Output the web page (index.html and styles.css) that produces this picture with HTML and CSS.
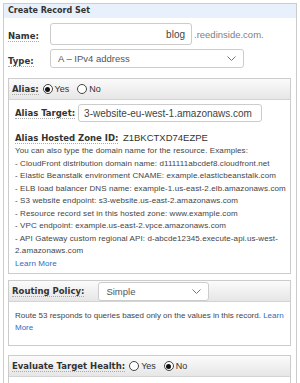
FILE: index.html
```html
<!DOCTYPE html>
<html lang="en">
<head>
    <meta charset="UTF-8">
    <meta name="viewport" content="width=device-width, initial-scale=1.0">
    <title>Create Record Set</title>
    <link rel="stylesheet" href="styles.css">
</head>
<body>
    <div class="panel">
        <div class="panel-head">Create Record Set</div>
        <div class="panel-body">

            <div class="row">
                <div class="field-label"><span class="label">Name:</span></div>
                <div class="input name-input">blog</div>
                <span class="suffix">.reedinside.com.</span>
            </div>

            <div class="row type-row">
                <div class="field-label"><span class="label">Type:</span></div>
                <div class="input select type-select">
                    <span>A – IPv4 address</span>
                    <svg class="chevron" width="9" height="5" viewBox="0 0 9 5"><path d="M0.5 0.5 L4.5 4.5 L8.5 0.5" fill="none" stroke="#777" stroke-width="1"/></svg>
                </div>
            </div>

            <!-- alias -->
            <div class="section alias">
                <div class="section-head">
                    <span class="label">Alias:</span>
                    <span class="radio checked"></span><span class="radio-text">Yes</span>
                    <span class="radio"></span><span class="radio-text">No</span>
                </div>
                <div class="section-body">
                    <div class="target-row">
                        <span class="label">Alias Target:</span>
                        <div class="input target-input">3-website-eu-west-1.amazonaws.com</div>
                    </div>
                    <div class="zone-row">
                        <span class="label">Alias Hosted Zone ID:</span> <span class="zone-id">Z1BKCTXD74EZPE</span>
                    </div>
                    <div class="help">
                        <div>You can also type the domain name for the resource. Examples:</div>
                        <div>- CloudFront distribution domain name: d111111abcdef8.cloudfront.net</div>
                        <div>- Elastic Beanstalk environment CNAME: example.elasticbeanstalk.com</div>
                        <div>- ELB load balancer DNS name: example-1.us-east-2.elb.amazonaws.com</div>
                        <div>- S3 website endpoint: s3-website.us-east-2.amazonaws.com</div>
                        <div>- Resource record set in this hosted zone: www.example.com</div>
                        <div>- VPC endpoint: example.us-east-2.vpce.amazonaws.com</div>
                        <div>- API Gateway custom regional API: d-abcde12345.execute-api.us-west-2.amazonaws.com</div>
                        <a href="#" class="link">Learn More</a>
                    </div>
                </div>
            </div>

            <!-- routing -->
            <div class="section routing">
                <div class="section-head">
                    <span class="label">Routing Policy:</span>
                    <div class="input select policy-select">
                        <span>Simple</span>
                        <svg class="chevron" width="9" height="5" viewBox="0 0 9 5"><path d="M0.5 0.5 L4.5 4.5 L8.5 0.5" fill="none" stroke="#777" stroke-width="1"/></svg>
                    </div>
                </div>
                <div class="section-body routing-body">
                    Route 53 responds to queries based only on the values in this record. <a href="#" class="link">Learn More</a>
                </div>
            </div>

            <!-- health -->
            <div class="section health">
                <div class="section-head">
                    <span class="label">Evaluate Target Health:</span>
                    <span class="radio"></span><span class="radio-text">Yes</span>
                    <span class="radio checked"></span><span class="radio-text">No</span>
                </div>
                <div class="section-body health-body"></div>
            </div>

        </div>
    </div>
</body>
</html>
```

FILE: styles.css
```css
body {
    margin: 0;
    font-family: "Liberation Sans", Arial, sans-serif;
    color: #333;
    background: #fff;
}
.panel {
    margin: 3px 3px 0;
    border: 1px solid #ccc;
    border-bottom: none;
}
.panel-head {
    background-color: #e8f0fb;
    font-family: "DejaVu Sans", Verdana, sans-serif;
    font-weight: bold;
    font-size: 8px;
    height: 14px;
    line-height: 14px;
    padding-left: 4px;
    color: #333;
}
.panel-body {
    padding: 5px 5px 0 4px;
}
.label {
    font-family: "DejaVu Sans", Verdana, sans-serif;
    font-weight: bold;
    font-size: 8.5px;
    color: #333;
    border-bottom: 1px dotted #aaa;
    white-space: nowrap;
}
.row {
    display: flex;
    align-items: center;
}
.type-row {
    margin-top: 4px;
}
.field-label {
    width: 42px;
    flex: none;
}
.input {
    box-sizing: border-box;
    border: 1px solid #ccc;
    border-radius: 3px;
    background: #fff;
    display: flex;
    align-items: center;
    font-size: 10px;
    color: #444;
    padding: 0 6px;
    white-space: nowrap;
    overflow: hidden;
}
.name-input {
    width: 142px;
    height: 22px;
    justify-content: flex-end;
}
.suffix {
    margin-left: 2px;
    font-size: 9.5px;
    color: #808080;
}
.select {
    justify-content: space-between;
    font-size: 9.5px;
    color: #555;
}
.type-select {
    width: 194px;
    height: 19px;
    padding: 0 7px;
}
.chevron {
    flex: none;
}
.section {
    border: 1px solid #ccc;
    margin-top: 9px;
}
.section.alias {
    margin-top: 10px;
}
.section.routing {
    margin-top: 6px;
}
.section-head {
    height: 20px;
    display: flex;
    align-items: center;
    padding-left: 3px;
    background: linear-gradient(#fbfbfb, #e6e6e6);
    border-bottom: 1px solid #d4d4d4;
}
.section-head .label {
    margin-right: 4px;
}
.radio {
    box-sizing: border-box;
    width: 10px;
    height: 10px;
    border: 1px solid #444;
    border-radius: 50%;
    background: #fff;
    display: flex;
    align-items: center;
    justify-content: center;
    margin-right: 2px;
}
.radio.checked::after {
    content: "";
    width: 5px;
    height: 5px;
    border-radius: 50%;
    background: #111;
}
.radio-text {
    font-size: 9px;
    color: #333;
    margin-right: 8px;
}
.section-body {
    background: #fff;
    padding: 4px 3px 3px 6px;
}
.target-row {
    display: flex;
    align-items: center;
}
.target-input {
    margin-left: 3px;
    width: 184px;
    height: 18px;
    padding: 0 5px;
}
.zone-row {
    margin-top: 7px;
    height: 14px;
    line-height: 14px;
}
.zone-id {
    font-size: 9.5px;
    color: #333;
}
.help {
    margin-top: 2px;
    font-size: 8px;
    letter-spacing: 0.1px;
    line-height: 12.5px;
    color: #444;
}
.link {
    color: #2a6ec4;
    text-decoration: none;
}
.policy-select {
    width: 111px;
    height: 19px;
    margin-left: 10px;
    padding: 0 7px;
    font-size: 9.5px;
}
.routing-body {
    font-size: 8px;
    line-height: 12px;
    color: #444;
    padding: 8px 3px 11px 6px;
}
.health-body {
    height: 20px;
}
```
